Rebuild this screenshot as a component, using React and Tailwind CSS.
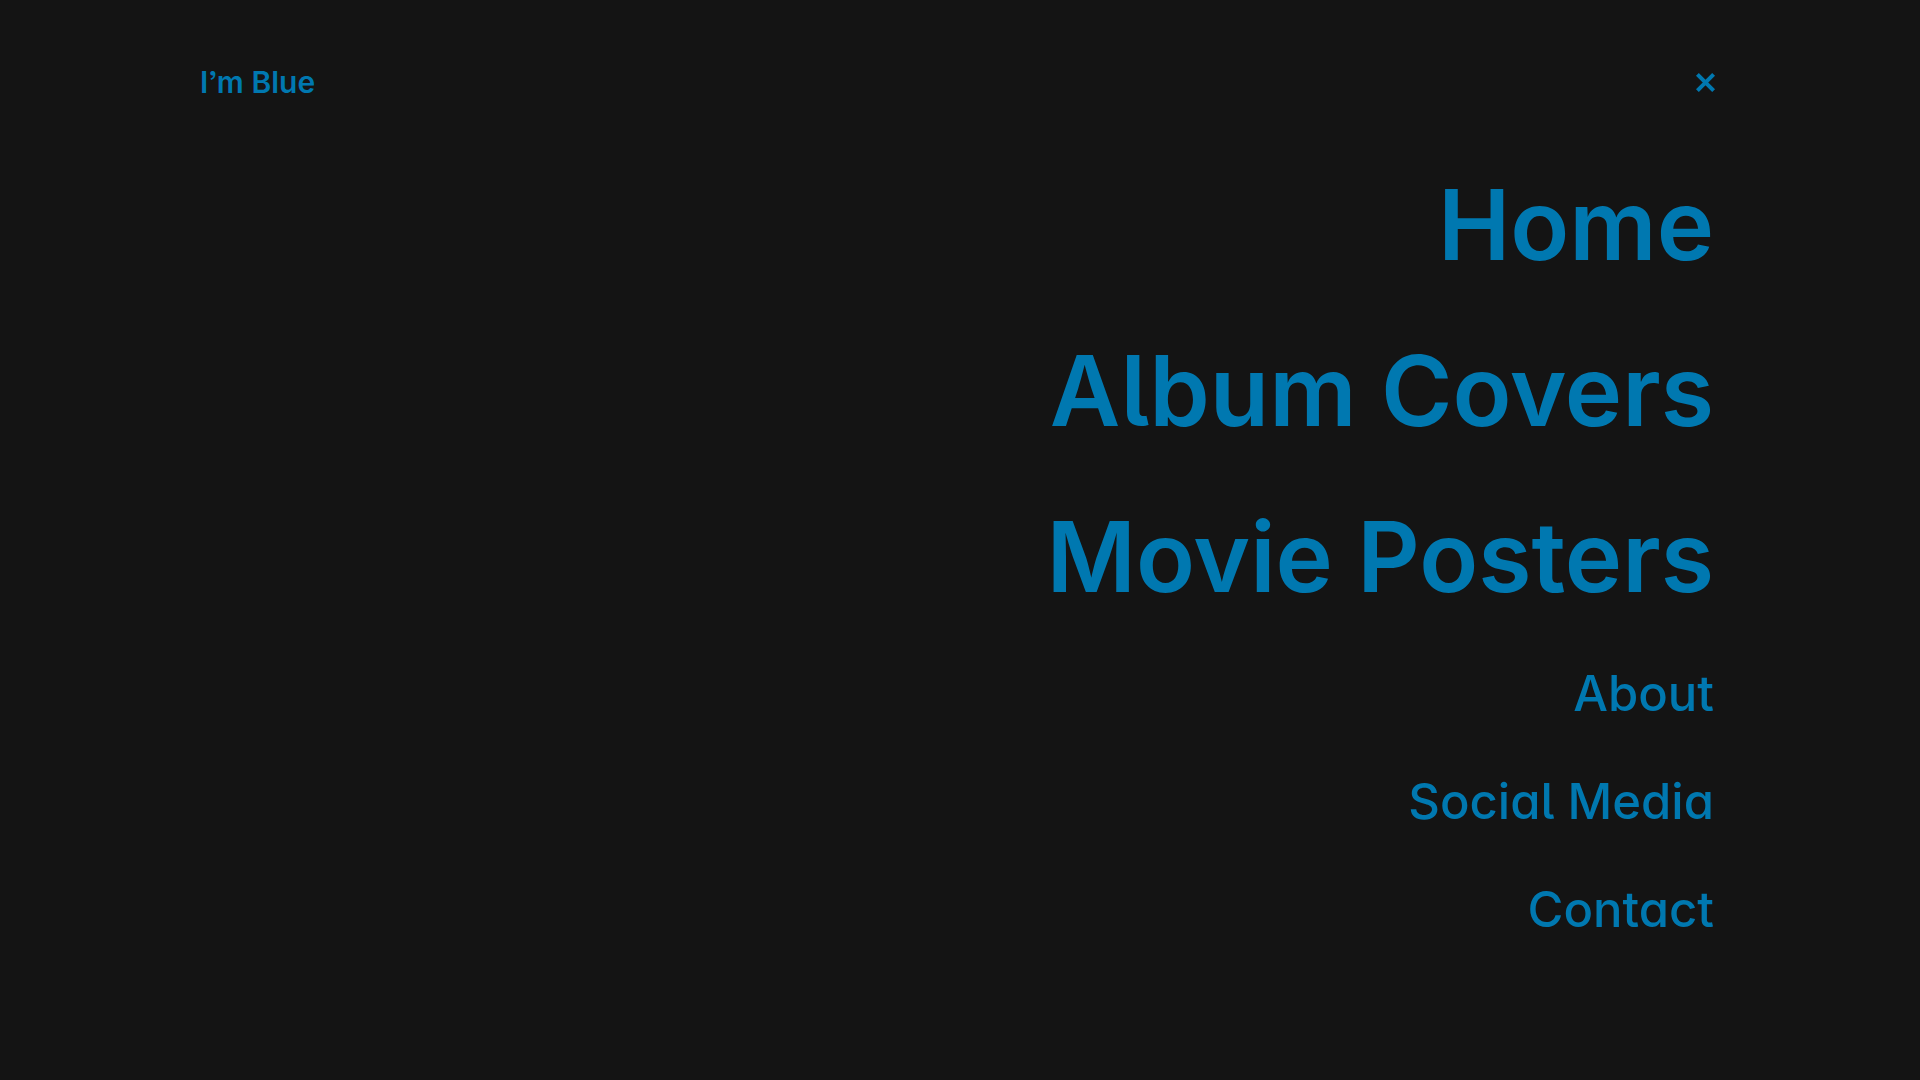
const mainLinks = ['Home', 'Album Covers', 'Movie Posters'];
const subLinks = ['About', 'Social Media', 'Contact'];

export default function App() {
  return (
    <div className="min-h-screen bg-[#141414] px-[200px] pt-[62px] font-['Inter',sans-serif] text-[#0078b0] [font-feature-settings:'cv05','cv11']">
      <header className="flex h-10 items-center justify-between pr-1">
        <a href="#" className="text-[30px] leading-10 font-semibold [font-feature-settings:'ss03']">I’m Blue</a>
        <button type="button" aria-label="Close menu">
          <svg className="size-5" viewBox="0 0 20 20" fill="none" stroke="currentColor" strokeWidth="4" aria-hidden="true">
            <path d="M1.4 2.4 17.6 18.6M17.6 2.4 1.4 18.6" />
          </svg>
        </button>
      </header>
      <nav className="flex flex-col items-end pt-10 pr-1.5">
        {mainLinks.map((label) => (
          <a key={label} href="#" className="text-[97px] leading-[166px] font-semibold">{label}</a>
        ))}
        {subLinks.map((label) => (
          <a key={label} href="#" className="text-[49px] leading-[108px] font-medium">{label}</a>
        ))}
      </nav>
    </div>
  );
}
